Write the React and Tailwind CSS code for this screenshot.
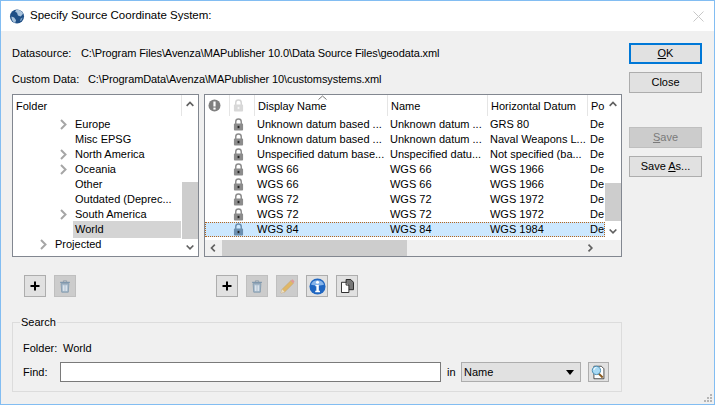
import { useState } from "react";

const treeRows = [
  { label: "Europe", arrow: true, level: 2 },
  { label: "Misc EPSG", level: 2 },
  { label: "North America", arrow: true, level: 2 },
  { label: "Oceania", arrow: true, level: 2 },
  { label: "Other", level: 2 },
  { label: "Outdated (Deprec...", level: 2 },
  { label: "South America", arrow: true, level: 2 },
  { label: "World", level: 2, selected: true },
  { label: "Projected", arrow: true, level: 1 },
];

const tableRows = [
  ["Unknown datum based ...", "Unknown datum ...", "GRS 80", "De"],
  ["Unknown datum based ...", "Unknown datum ...", "Naval Weapons L...", "De"],
  ["Unspecified datum base...", "Unspecified datu...", "Not specified (ba...", "De"],
  ["WGS 66", "WGS 66", "WGS 1966", "De"],
  ["WGS 66", "WGS 66", "WGS 1966", "De"],
  ["WGS 72", "WGS 72", "WGS 1972", "De"],
  ["WGS 72", "WGS 72", "WGS 1972", "De"],
  ["WGS 84", "WGS 84", "WGS 1984", "De"],
];

const Lock = ({ color = "#8c8c8c", light = false }) => (
  <svg width="11" height="13" viewBox="0 0 12 14">
    <path d="M3 6.5V4a3 3 0 0 1 6 0v2.5" fill="none" stroke={light ? "#d4d4d4" : color} strokeWidth="1.6" />
    <rect x="1" y="6" width="10" height="7.5" rx="1" fill={light ? "#d8d8d8" : color} />
    <rect x="5" y="8.5" width="2" height="2.5" fill={light ? "#f4f4f4" : "#222"} />
  </svg>
);

const Chevron = ({ dir }) => {
  const paths = {
    up: "M2 7l4-4 4 4",
    down: "M2 3l4 4 4-4",
    left: "M7 2L3 6l4 4",
    right: "M3 2l4 4-4 4",
  };
  const size = dir === "up" || dir === "down" ? "w-[12px] h-[10px]" : "w-[10px] h-[12px]";
  return (
    <svg className={size} viewBox="0 0 12 12" fill="none" stroke="#606060" strokeWidth="2">
      <path d={paths[dir]} />
    </svg>
  );
};

const TreeArrow = () => (
  <svg width="7" height="11" viewBox="0 0 7 11" fill="none" stroke="#a6a6a6" strokeWidth="2">
    <path d="M1 1l4.5 4.5L1 10" />
  </svg>
);

const Globe = () => (
  <svg width="16" height="15" viewBox="0 0 16 16">
    <circle cx="8" cy="8" r="7.5" fill="#1f4f86" />
    <path d="M7 1c3-.6 6 1 7.5 4L12 8 9 7 8 4 6 3zM2 8l3 1 2 3-1 3c-2-.6-4-3-4-7z" fill="#a9c3dc" />
    <path d="M12 10l2-1-1 3-2 1z" fill="#7fa3c7" />
  </svg>
);

const Plus = () => (
  <svg width="12" height="12" viewBox="0 0 12 12">
    <path d="M6 1.5v9M1.5 6h9" stroke="#000" strokeWidth="2" />
  </svg>
);

const Trash = () => (
  <svg width="12" height="13" viewBox="0 0 14 16">
    <path d="M1 3h12" stroke="#7f97ad" strokeWidth="1.6" />
    <path d="M5 2.5V1h4v1.5" fill="none" stroke="#8a9aa8" />
    <path d="M2.2 4.5h9.6l-.8 10.5H3z" fill="#a9bccd" stroke="#7f97ad" />
    <path d="M5 6.5v7M7 6.5v7M9 6.5v7" stroke="#eef2f6" />
  </svg>
);

const Pencil = () => (
  <svg width="15" height="15" viewBox="0 0 16 16">
    <path d="M1 15l1.2-4L11.5 1.8l2.8 2.8L5 13.8z" fill="#e0b766" stroke="#bfa274" strokeWidth=".6" />
    <path d="M11.5 1.8l1-1c.5-.4 1-.4 1.4 0l1.2 1.2c.4.4.4 1 0 1.4l-1 1.2z" fill="#df9a9a" />
    <path d="M1 15l1.2-4 2.8 2.8z" fill="#eadfc8" />
  </svg>
);

const Info = () => (
  <svg width="17" height="17" viewBox="0 0 18 18">
    <circle cx="9" cy="9" r="8.5" fill="#1f66c1" />
    <path d="M2 7a7.5 7 0 0 1 14 0c-3 1.5-10 1.5-14 0z" fill="#86b4ea" />
    <circle cx="9" cy="4.6" r="1.6" fill="#fff" />
    <path d="M6.8 7.4h3.6v6.2h1.2v1.4H6.6v-1.4h1.2V8.8h-1z" fill="#fff" />
  </svg>
);

const Copy = () => (
  <svg width="13" height="14" viewBox="0 0 14 15">
    <path d="M5.5.5h5l3 3v8h-8z" fill="#777" stroke="#222" />
    <path d="M.5 3.5h5l3 3v8h-8z" fill="#fff" stroke="#222" />
    <path d="M5.5 3.5v3h3" fill="#ddd" stroke="#222" />
  </svg>
);

const SearchDoc = () => (
  <svg width="15" height="15" viewBox="0 0 18 18">
    <path d="M3.5 1.5h9l3 3v12h-12z" fill="#fff" stroke="#333" />
    <path d="M9 10l5 5" stroke="#8a5a1e" strokeWidth="2.4" />
    <circle cx="6.5" cy="6.5" r="5" fill="#a9daf4" stroke="#4d8fb5" strokeWidth="1.2" />
    <path d="M3.5 6a3 3 0 0 1 3-3" stroke="#fff" strokeWidth="1.2" fill="none" />
  </svg>
);

const ToolButton = ({ disabled, children }) => (
  <button className={`w-[22px] h-[22px] flex items-center justify-center border ${disabled ? "bg-[#cccccc] border-[#bfbfbf]" : "bg-[#e1e1e1] border-[#adadad]"}`}>
    {children}
  </button>
);

const DialogButton = ({ children, isDefault, disabled, className = "" }) => (
  <button className={`w-[73px] h-[21px] flex items-center justify-center leading-none ${isDefault ? "border-2 border-[#0078d7] bg-[#e1e1e1]" : disabled ? "border border-[#bfbfbf] bg-[#cccccc] text-[#7a7a7a]" : "border border-[#adadad] bg-[#e1e1e1]"} ${className}`}>
    {children}
  </button>
);

const App = () => {
  const [find, setFind] = useState("");

  return (
    <div className="w-[715px] h-[405px] overflow-hidden flex flex-col bg-[#f0f0f0] border-x border-b border-[#82bdf2] text-[11px] text-black font-['Liberation_Sans',sans-serif] relative">
      <div className="h-[31px] shrink-0 bg-white flex items-center pl-[8px] pr-[8px] border-t border-[#82bdf2]">
        <Globe />
        <span className="ml-[5px] text-[11.5px]">Specify Source Coordinate System:</span>
        <svg className="ml-auto mr-[2px]" width="11" height="11" viewBox="0 0 11 11" stroke="#c8c8c8" strokeWidth="1">
          <path d="M.5.5l10 10M10.5.5l-10 10" />
        </svg>
      </div>

      <div className="flex flex-1 pl-[11px]">
        <div className="w-[610px] shrink-0 flex flex-col">
          <div className="mt-[13px] h-[18px] flex items-center whitespace-nowrap">
            <span className="w-[69px]">Datasource:</span>
            <span className="tracking-[-0.1px]">C:\Program Files\Avenza\MAPublisher 10.0\Data Source Files\geodata.xml</span>
          </div>
          <div className="mt-[8px] h-[18px] flex items-center whitespace-nowrap">
            <span className="w-[76px]">Custom Data:</span>
            <span className="tracking-[-0.1px]">C:\ProgramData\Avenza\MAPublisher 10\customsystems.xml</span>
          </div>

          <div className="mt-[6px] flex gap-[5px] h-[163px]">
            {/* folder tree */}
            <div className="w-[187px] border border-[#828790] bg-white flex">
              <div className="w-[169px] flex flex-col">
                <div className="h-[21px] pl-[3px] pt-[1px] flex items-center border-r border-[#e5e5e5]">Folder</div>
                <div className="pt-[1px] flex flex-col">
                  {treeRows.map((row) => (
                    <div key={row.label} className={`h-[15px] flex items-center whitespace-nowrap ${row.level === 2 ? "pl-[47px]" : "pl-[27px]"}`}>
                      <span className="w-[13px] flex items-center shrink-0">{row.arrow && <TreeArrow />}</span>
                      <span className={`pl-[2px] ${row.selected ? "bg-[#d4d4d4] w-[108px]" : ""}`}>{row.label}</span>
                    </div>
                  ))}
                </div>
              </div>
              <div className="w-[16px] flex flex-col bg-white">
                <div className="h-[21px] flex items-center justify-center pb-[2px]"><Chevron dir="up" /></div>
                <div className="flex-1 flex flex-col">
                  <div className="h-[66px]" />
                  <div className="h-[57px] bg-[#cdcdcd]" />
                </div>
                <div className="h-[16px] flex items-center justify-center"><Chevron dir="down" /></div>
              </div>
            </div>

            {/* coordinate systems table */}
            <div className="w-[418px] border border-[#828790] bg-white flex flex-col">
              <div className="flex flex-1 min-h-0">
                <div className="w-[400px] flex flex-col overflow-hidden">
                  <div className="h-[21px] shrink-0 flex items-center relative">
                    <div className="w-[25px] h-full pl-[3px] flex items-center border-r border-[#e5e5e5]">
                      <svg width="13" height="13" viewBox="0 0 13 13">
                        <circle cx="6.5" cy="6.5" r="6" fill="#808080" />
                        <rect x="5.4" y="2.5" width="2.2" height="5" fill="#fff" />
                        <rect x="5.4" y="8.6" width="2.2" height="2" fill="#fff" />
                      </svg>
                    </div>
                    <div className="w-[25px] h-full pl-[3px] flex items-center border-r border-[#e5e5e5]"><Lock light /></div>
                    <div className="w-[133px] h-full pl-[3px] pt-[1px] flex items-center border-r border-[#e5e5e5]">Display Name</div>
                    <div className="w-[100px] h-full pl-[3px] pt-[1px] flex items-center border-r border-[#e5e5e5]">Name</div>
                    <div className="w-[100px] h-full pl-[3px] pt-[1px] flex items-center border-r border-[#e5e5e5] whitespace-nowrap">Horizontal Datum</div>
                    <div className="pl-[3px] pt-[1px] whitespace-nowrap">Po</div>
                    <svg className="absolute left-[113px] top-0" width="9" height="5" viewBox="0 0 9 5" fill="none" stroke="#777">
                      <path d="M.5 4.5l4-3.5 4 3.5" />
                    </svg>
                  </div>
                  <div className="pt-[1px] flex flex-col">
                    {tableRows.map((row, i) => {
                      const selected = row[0] === "WGS 84";
                      return (
                        <div key={i} className={`h-[15px] flex items-center whitespace-nowrap border border-dotted ${selected ? "bg-[#cce8ff] border-[#b5651d]" : "border-transparent"}`}>
                          <div className="w-[24px]" />
                          <div className="w-[25px] pl-[3px] flex"><Lock color={selected ? "#6b8fb0" : "#8c8c8c"} /></div>
                          <div className="w-[133px] pl-[2px] overflow-hidden">{row[0]}</div>
                          <div className="w-[100px] pl-[2px] overflow-hidden">{row[1]}</div>
                          <div className="w-[100px] pl-[2px] overflow-hidden">{row[2]}</div>
                          <div className="pl-[2px]">{row[3]}</div>
                        </div>
                      );
                    })}
                  </div>
                </div>
                <div className="w-[16px] flex flex-col">
                  <div className="h-[21px] flex items-center justify-center pb-[2px]"><Chevron dir="up" /></div>
                  <div className="flex-1 flex flex-col">
                    <div className="h-[67px]" />
                    <div className="h-[38px] bg-[#cdcdcd]" />
                  </div>
                  <div className="h-[16px] flex items-center justify-center"><Chevron dir="down" /></div>
                </div>
              </div>
              <div className="h-[16px] shrink-0 bg-[#f0f0f0] flex items-center">
                <div className="w-[17px] flex justify-center"><Chevron dir="left" /></div>
                <div className="w-[185px] h-full bg-[#cdcdcd]" />
                <div className="w-[189px] flex justify-end"><Chevron dir="right" /></div>
              </div>
            </div>
          </div>

          <div className="mt-[18px] flex">
            <div className="w-[192px] pl-[12px] flex gap-[8px]">
              <ToolButton><Plus /></ToolButton>
              <ToolButton disabled><Trash /></ToolButton>
            </div>
            <div className="pl-[12px] flex gap-[8px]">
              <ToolButton><Plus /></ToolButton>
              <ToolButton disabled><Trash /></ToolButton>
              <ToolButton disabled><Pencil /></ToolButton>
              <ToolButton><Info /></ToolButton>
              <ToolButton><Copy /></ToolButton>
            </div>
          </div>

          <fieldset className="mt-[17px] w-[610px] h-[78px] border border-[#dcdcdc] pl-[10px] pr-[12px]">
            <legend className="ml-[-3px] px-[1px] leading-[16px]">Search</legend>
            <div className="mt-[10px] h-[16px] flex items-center">
              <span className="w-[40px]">Folder:</span>
              <span>World</span>
            </div>
            <div className="mt-[6px] flex items-center">
              <span className="w-[37px]">Find:</span>
              <input
                value={find}
                onChange={(e) => setFind(e.target.value)}
                className="w-[381px] h-[20px] bg-white border border-[#7a7a7a] outline-none"
              />
              <span className="ml-[6px] w-[14px]">in</span>
              <div className="w-[120px] h-[20px] border border-[#adadad] bg-[#e1e1e1] flex items-center pl-[2px] pr-[6px] justify-between">
                <span>Name</span>
                <svg width="8" height="5" viewBox="0 0 8 5"><path d="M0 0h8L4 5z" fill="#000" /></svg>
              </div>
              <button className="ml-[7px] w-[21px] h-[20px] border border-[#adadad] bg-[#e1e1e1] flex items-center justify-center"><SearchDoc /></button>
            </div>
          </fieldset>
        </div>

        <div className="ml-[7px] pt-[12px] flex flex-col">
          <DialogButton isDefault><span><u>O</u>K</span></DialogButton>
          <DialogButton className="mt-[8px]">Close</DialogButton>
          <DialogButton disabled className="mt-[34px]"><span><u>S</u>ave</span></DialogButton>
          <DialogButton className="mt-[8px]"><span>Save <u>A</u>s...</span></DialogButton>
        </div>
      </div>

      {/* resize grip */}
      <svg className="absolute right-[2px] bottom-[2px]" width="8" height="8" viewBox="0 0 8 8" fill="#b5b5b5">
        <rect x="6" y="0" width="2" height="2" />
        <rect x="3" y="3" width="2" height="2" />
        <rect x="6" y="3" width="2" height="2" />
        <rect x="0" y="6" width="2" height="2" />
        <rect x="3" y="6" width="2" height="2" />
        <rect x="6" y="6" width="2" height="2" />
      </svg>
    </div>
  );
};

export default App;
